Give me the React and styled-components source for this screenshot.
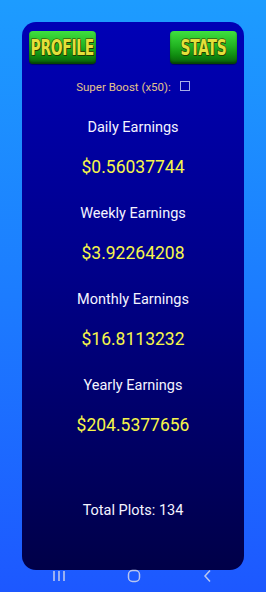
import React, { useState } from 'react';
import styled, { createGlobalStyle } from 'styled-components';

const GlobalStyle = createGlobalStyle`
  html, body {
    margin: 0;
    padding: 0;
  }
  body {
    font-family: Roboto, "Liberation Sans", sans-serif;
    background: linear-gradient(180deg, #1d9cff 0%, #1c7cff 50%, #1d58ff 100%);
    min-height: 592px;
  }
`;

const Screen = styled.div`
  width: 266px;
  height: 592px;
  display: flex;
  flex-direction: column;
  align-items: center;
`;

const Card = styled.div`
  margin-top: 22px;
  width: 222px;
  height: 548px;
  box-sizing: border-box;
  border-radius: 14px;
  background: linear-gradient(180deg, #0000b6 0%, #00008a 45%, #000048 100%);
  display: flex;
  flex-direction: column;
  align-items: center;
  padding: 9px 7px 0 7px;
`;

const Toolbar = styled.div`
  width: 100%;
  display: flex;
  justify-content: space-between;
`;

const GameButton = styled.button`
  width: ${p => p.$w}px;
  height: 33px;
  border: none;
  border-radius: 4px;
  padding: 0;
  display: flex;
  align-items: center;
  justify-content: center;
  overflow: hidden;
  background: linear-gradient(180deg, #3fe03f 0%, #22b422 45%, #0f8a0f 75%, #0a5c0a 100%);
  box-shadow: inset 0 -2px 2px rgba(0, 40, 0, 0.5), 0 1px 1px rgba(0, 0, 0, 0.4);
  cursor: pointer;
`;

const ButtonText = styled.span`
  display: inline-block;
  transform: scaleX(0.63);
  font-family: "DejaVu Sans", sans-serif;
  font-weight: bold;
  font-size: 22px;
  line-height: 22px;
  letter-spacing: -0.5px;
  color: #e4e03a;
  -webkit-text-stroke: 1.2px #3a3300;
  paint-order: stroke fill;
  text-shadow: 1px 1px 0 #1c3c00;
  white-space: nowrap;
`;

const BoostRow = styled.label`
  margin-top: 16px;
  display: flex;
  align-items: center;
  gap: 9px;
  font-size: 11.5px;
  line-height: 14px;
  color: #e2c28c;
`;

const Check = styled.span`
  width: 8px;
  height: 8px;
  border: 1px solid #a7aee6;
  box-sizing: content-box;
  margin-top: -3px;
`;

const Stats = styled.div`
  margin-top: 24px;
  display: flex;
  flex-direction: column;
  align-items: center;
  gap: 25px;
`;

const Stat = styled.div`
  display: flex;
  flex-direction: column;
  align-items: center;
  gap: 17px;
`;

const Label = styled.div`
  font-size: 14.5px;
  line-height: 20px;
  color: #f4f4ff;
`;

const Value = styled.div`
  font-size: 17.5px;
  line-height: 24px;
  color: #f6f64a;
`;

const Total = styled.div`
  margin-top: 64px;
  font-size: 14.5px;
  line-height: 20px;
  color: #f4f4ff;
`;

const NavBar = styled.div`
  width: 100%;
  height: 22px;
  display: flex;
  justify-content: space-between;
  align-items: flex-start;
  padding: 0 50px 0 51px;
  box-sizing: border-box;
  color: #b9c6ef;
`;

const NavIcon = styled.svg`
  width: 16px;
  height: 14px;
  margin-top: -1px;
`;

const stats = [
  { label: 'Daily Earnings', value: '$0.56037744' },
  { label: 'Weekly Earnings', value: '$3.92264208' },
  { label: 'Monthly Earnings', value: '$16.8113232' },
  { label: 'Yearly Earnings', value: '$204.5377656' },
];

export default function App() {
  const [boost, setBoost] = useState(false);
  return (
    <Screen>
      <GlobalStyle />
      <Card>
        <Toolbar>
          <GameButton $w={67}><ButtonText>PROFILE</ButtonText></GameButton>
          <GameButton $w={67}><ButtonText>STATS</ButtonText></GameButton>
        </Toolbar>
        <BoostRow onClick={() => setBoost(!boost)}>
          Super Boost (x50):
          <Check />
        </BoostRow>
        <Stats>
          {stats.map(s => (
            <Stat key={s.label}>
              <Label>{s.label}</Label>
              <Value>{s.value}</Value>
            </Stat>
          ))}
        </Stats>
        <Total>Total Plots: 134</Total>
      </Card>
      <NavBar>
        <NavIcon viewBox="0 0 16 14">
          <path d="M3 2v10M8 2v10M13 2v10" stroke="currentColor" strokeWidth="1.6" fill="none" />
        </NavIcon>
        <NavIcon viewBox="0 0 16 14">
          <rect x="2.5" y="1.5" width="11" height="11" rx="4" stroke="currentColor" strokeWidth="1.5" fill="none" />
        </NavIcon>
        <NavIcon viewBox="0 0 16 14">
          <path d="M10 1.5L5 7l5 5.5" stroke="currentColor" strokeWidth="1.5" fill="none" />
        </NavIcon>
      </NavBar>
    </Screen>
  );
}
